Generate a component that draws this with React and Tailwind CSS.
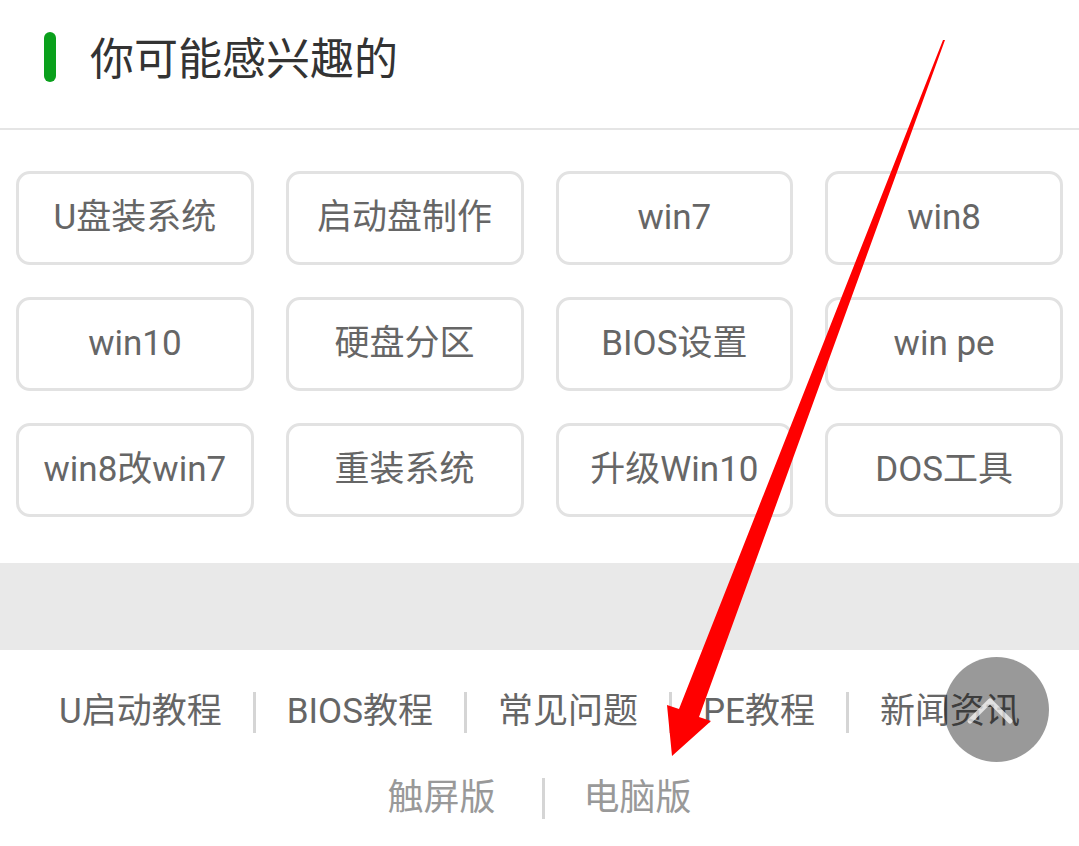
import React from "react";

const tags = [
  "U盘装系统", "启动盘制作", "win7", "win8",
  "win10", "硬盘分区", "BIOS设置", "win pe",
  "win8改win7", "重装系统", "升级Win10", "DOS工具",
];

const links = ["U启动教程", "BIOS教程", "常见问题", "PE教程", "新闻资讯"];

const font = { fontFamily: 'Roboto, "Noto Sans CJK SC", sans-serif' };

export default function App() {
  return (
    <div
      className="relative w-[1079px] h-[846px] overflow-hidden bg-white"
      style={font}
    >
      {/* header */}
      <div className="flex items-center h-[128px] pl-[44px] pb-[14px]">
        <div className="w-[12px] h-[50px] rounded-full bg-[#0aa01c]" />
        <div className="ml-[34px] pt-[6px] text-[44px] leading-[50px] text-[#333333]">
          你可能感兴趣的
        </div>
      </div>
      <div className="h-[2px] bg-[#e5e5e5]" />

      {/* tag grid */}
      <div className="grid grid-cols-4 gap-x-[32px] gap-y-[32px] px-[16px] pt-[41px] pb-[46px]">
        {tags.map((t) => (
          <div
            key={t}
            className="h-[94px] flex items-center justify-center rounded-[14px] border-[3px] border-[#e2e2e2] text-[35px] text-[#666666] whitespace-nowrap"
          >
            {t}
          </div>
        ))}
      </div>

      {/* gray band */}
      <div className="h-[87px] bg-[#e9e9e9]" />

      {/* footer */}
      <div className="flex flex-col items-center pt-[37px]">
        <div className="flex items-center h-[50px]">
          {links.map((l, i) => (
            <React.Fragment key={l}>
              {i > 0 && <div className="w-[3px] h-[41px] bg-[#d5d5d5]" />}
              <div className="px-[31px] text-[35px] leading-[50px] text-[#666666] whitespace-nowrap">
                {l}
              </div>
            </React.Fragment>
          ))}
        </div>
        <div className="flex items-center h-[50px] mt-[36px]">
          <div className="pr-[46px] text-[36px] leading-[50px] text-[#999999]">触屏版</div>
          <div className="w-[3px] h-[41px] bg-[#d5d5d5]" />
          <div className="pl-[39px] text-[36px] leading-[50px] text-[#999999]">电脑版</div>
        </div>
      </div>

      {/* back to top button */}
      <div className="absolute left-[944px] top-[657px] w-[105px] h-[105px] rounded-full bg-black/40">
        <svg width="105" height="105" viewBox="0 0 105 105" className="absolute inset-0">
          <polyline
            points="26,64 46,44 66,64"
            fill="none"
            stroke="#ffffff"
            strokeOpacity="0.7"
            strokeWidth="5"
            strokeLinecap="round"
            strokeLinejoin="round"
          />
        </svg>
      </div>

      {/* red annotation arrow */}
      <svg
        className="absolute inset-0 pointer-events-none"
        width="1079"
        height="846"
        viewBox="0 0 1079 846"
      >
        <polygon
          points="943,40 945,40 699,717 711,721 672,756 667,705 679,709"
          fill="#ff0000"
        />
      </svg>
    </div>
  );
}
